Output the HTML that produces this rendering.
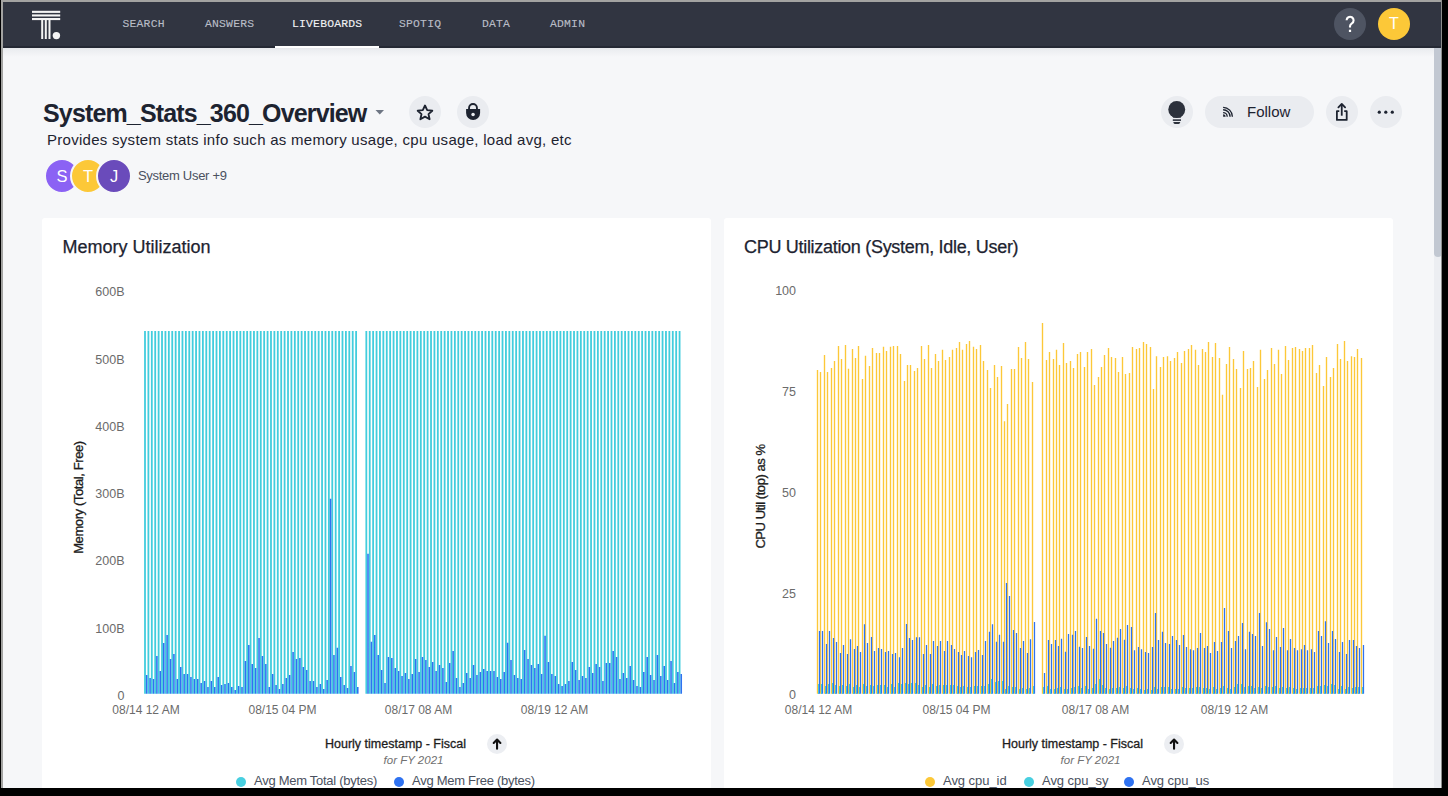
<!DOCTYPE html><html><head><meta charset="utf-8"><style>
*{box-sizing:border-box}
html,body{margin:0;padding:0}
body{width:1448px;height:796px;overflow:hidden;position:relative;background:#000;font-family:"Liberation Sans",sans-serif}
.a{position:absolute}
.t{position:absolute;white-space:nowrap;line-height:1}
.circ{position:absolute;border-radius:50%}
.nav{font-family:"Liberation Mono",monospace;font-size:11.4px;color:#b9bdc7;letter-spacing:0.2px;-webkit-text-stroke:0.12px currentColor}
</style></head><body>
<div class="a" style="left:1px;top:0;width:1441px;height:788px;background:#a3a3a1"></div>
<div class="a" style="left:2.5px;top:47px;width:1440px;height:741px;background:#f6f7f9"></div>
<div class="a" style="left:2.5px;top:1.5px;width:1440px;height:46px;background:#313541"></div>
<div class="a" style="left:2.5px;top:46px;width:1440px;height:1.5px;background:#252934"></div>
<div class="a" style="left:2.5px;top:47.5px;width:1431px;height:9px;background:linear-gradient(#e6e7eb,#eceef1 25%,#f6f7f9)"></div>
<svg class="a" style="left:0;top:0" width="80" height="48">
<g fill="#f4f4f4">
<rect x="32" y="10.8" width="28.2" height="2.1"/>
<rect x="32" y="14.4" width="28.2" height="2.1"/>
<rect x="32" y="18" width="28.2" height="2.1"/>
<rect x="41.2" y="20" width="2" height="19"/>
<rect x="44.8" y="20" width="2" height="19"/>
<rect x="48.5" y="20" width="2" height="19"/>
<circle cx="56.4" cy="35.6" r="3.7"/>
</g></svg>
<div class="t nav" style="left:122.5px;top:19.3px;color:#b9bdc7">SEARCH</div>
<div class="t nav" style="left:205px;top:19.3px;color:#b9bdc7">ANSWERS</div>
<div class="t nav" style="left:292px;top:19.3px;color:#f2f2f4">LIVEBOARDS</div>
<div class="t nav" style="left:399px;top:19.3px;color:#b9bdc7">SPOTIQ</div>
<div class="t nav" style="left:482px;top:19.3px;color:#b9bdc7">DATA</div>
<div class="t nav" style="left:550px;top:19.3px;color:#b9bdc7">ADMIN</div>
<div class="a" style="left:275px;top:46px;width:104px;height:2px;background:#fff"></div>
<div class="circ" style="left:1334px;top:8px;width:32px;height:32px;background:#4e5462"></div>
<svg class="a" style="left:1334px;top:8px" width="32" height="32"><path d="M12.6 12.2 A3.5 3.5 0 1 1 17.9 15.3 Q16 16.4 16 18.2 V19.6" fill="none" stroke="#fff" stroke-width="2.1"/><rect x="14.9" y="21.7" width="2.2" height="2.3" fill="#fff"/></svg>
<div class="circ" style="left:1378px;top:8px;width:32px;height:32px;background:#fcc838"></div>
<div class="t" style="left:1378px;top:16px;width:32px;text-align:center;font-size:16px;color:#fff">T</div>
<div class="a" style="left:1434px;top:48px;width:8px;height:740px;background:#eceef2"></div>
<div class="a" style="left:1434px;top:48px;width:7.5px;height:209px;background:#c2c8d2;border-radius:0 0 4px 4px"></div>
<div class="t" style="left:43px;top:100.8px;font-size:25px;font-weight:bold;color:#1d2330;letter-spacing:-0.85px">System_Stats_360_Overview</div>
<svg class="a" style="left:375px;top:109px" width="10" height="6"><path d="M0.5 1 L9 1 L4.75 5.5Z" fill="#6e7684"/></svg>
<div class="circ" style="left:409px;top:96px;width:32px;height:32px;background:#eaecf0"></div>
<svg class="a" style="left:409px;top:96px" width="32" height="32"><path transform="translate(16 16.9) scale(1.0) translate(-16 -16)" d="M16 8.6 L18.2 13.3 L23.3 13.8 L19.5 17.2 L20.6 22.3 L16 19.7 L11.4 22.3 L12.5 17.2 L8.7 13.8 L13.8 13.3Z" fill="none" stroke="#1d2330" stroke-width="1.85" stroke-linejoin="round"/></svg>
<div class="circ" style="left:457px;top:96px;width:32px;height:32px;background:#eaecf0"></div>
<svg class="a" style="left:457px;top:96px" width="32" height="32"><path d="M12.05 13.5 V11.95 A3.95 3.95 0 0 1 19.95 11.95 V13.5" fill="none" stroke="#1d2330" stroke-width="1.9"/><path d="M9.1 12.9 H23.1 V17 A7 7 0 0 1 9.1 17 Z" fill="#1d2330"/><circle cx="16.05" cy="18.6" r="1.75" fill="#eaecf0"/></svg>
<div class="t" style="left:47px;top:132px;font-size:15px;color:#1d2330;letter-spacing:0.28px">Provides system stats info such as memory usage, cpu usage, load avg, etc</div>
<div class="circ" style="left:44px;top:158px;width:36px;height:36px;background:#8b62f4;border:2px solid #f6f7f9"></div>
<div class="t" style="left:46px;top:168px;width:32px;text-align:center;font-size:16.5px;color:#fff">S</div>
<div class="circ" style="left:70px;top:158px;width:36px;height:36px;background:#fcc838;border:2px solid #f6f7f9"></div>
<div class="t" style="left:72px;top:168px;width:32px;text-align:center;font-size:16.5px;color:#fff">T</div>
<div class="circ" style="left:96px;top:158px;width:36px;height:36px;background:#6a4bbb;border:2px solid #f6f7f9"></div>
<div class="t" style="left:98px;top:168px;width:32px;text-align:center;font-size:16.5px;color:#fff">J</div>
<div class="t" style="left:138px;top:169.4px;font-size:13px;color:#4a5160;letter-spacing:-0.3px">System User +9</div>
<div class="circ" style="left:1161px;top:96px;width:32px;height:32px;background:#eaecf0"></div>
<svg class="a" style="left:1161px;top:96px" width="32" height="32"><circle cx="15.75" cy="13.45" r="8.45" fill="#2c313c"/><path d="M9.6 18 H21.9 L19.7 21.75 H12.25Z" fill="#2c313c"/><rect x="11.8" y="23.3" width="8.2" height="1.6" fill="#2c313c"/><path d="M12.25 26 H19.3 L18.8 27.2 Q18.4 28 17.5 28 H14 Q13.1 28 12.7 27.2Z" fill="#2c313c"/></svg>
<div class="a" style="left:1205px;top:96px;width:109px;height:32px;border-radius:16px;background:#eaecf0"></div>
<svg class="a" style="left:1221px;top:105px" width="14" height="14"><g fill="none" stroke="#1d2330" stroke-width="1.35"><path d="M2.1 7.6 A4.1 4.1 0 0 1 6.2 11.7"/><path d="M2.1 4.7 A7 7 0 0 1 9.1 11.7"/><path d="M2.1 2.4 A9.3 9.3 0 0 1 11.4 11.7"/></g><path d="M2.1 11.7 V9.2 A2.5 2.5 0 0 1 4.6 11.7Z" fill="#1d2330"/></svg>
<div class="t" style="left:1247px;top:103.5px;font-size:15px;color:#1d2330">Follow</div>
<div class="circ" style="left:1326px;top:96px;width:32px;height:32px;background:#eaecf0"></div>
<svg class="a" style="left:1326px;top:96px" width="32" height="32"><g fill="none" stroke="#1d2330" stroke-width="1.8" stroke-linejoin="round"><path d="M13.3 15.15 H10.9 V23.9 H20.7 V15.15 H18.2"/><path d="M15.75 19.7 V8.6"/><path d="M12.4 11.3 L15.75 7.9 L19.1 11.3" stroke-linecap="round"/></g></svg>
<div class="circ" style="left:1370px;top:96px;width:32px;height:32px;background:#eaecf0"></div>
<svg class="a" style="left:1370px;top:96px" width="32" height="32"><g fill="#1d2330"><circle cx="9.3" cy="16.15" r="1.6"/><circle cx="15.8" cy="16.15" r="1.6"/><circle cx="22.3" cy="16.15" r="1.6"/></g></svg>
<div class="a" style="left:42px;top:218px;width:669px;height:580px;background:#fff;border-radius:3px"></div>
<div class="a" style="left:724px;top:218px;width:669px;height:580px;background:#fff;border-radius:3px"></div>
<div class="t" style="left:62.5px;top:238.4px;font-size:18px;color:#1d2330;-webkit-text-stroke:0.25px #1d2330">Memory Utilization</div>
<div class="t" style="left:744px;top:238.2px;font-size:18px;color:#1d2330;letter-spacing:-0.3px;-webkit-text-stroke:0.25px #1d2330">CPU Utilization (System, Idle, User)</div>
<div class="t" style="left:64.5px;width:60px;text-align:right;top:689.9px;font-size:12.5px;color:#6b6b6b">0</div>
<div class="t" style="left:64.5px;width:60px;text-align:right;top:622.6px;font-size:12.5px;color:#6b6b6b">100B</div>
<div class="t" style="left:64.5px;width:60px;text-align:right;top:555.3px;font-size:12.5px;color:#6b6b6b">200B</div>
<div class="t" style="left:64.5px;width:60px;text-align:right;top:488.1px;font-size:12.5px;color:#6b6b6b">300B</div>
<div class="t" style="left:64.5px;width:60px;text-align:right;top:420.8px;font-size:12.5px;color:#6b6b6b">400B</div>
<div class="t" style="left:64.5px;width:60px;text-align:right;top:353.5px;font-size:12.5px;color:#6b6b6b">500B</div>
<div class="t" style="left:64.5px;width:60px;text-align:right;top:286.2px;font-size:12.5px;color:#6b6b6b">600B</div>
<div class="t" style="left:736px;width:60px;text-align:right;top:689.4px;font-size:12.5px;color:#6b6b6b">0</div>
<div class="t" style="left:736px;width:60px;text-align:right;top:588.4px;font-size:12.5px;color:#6b6b6b">25</div>
<div class="t" style="left:736px;width:60px;text-align:right;top:487.4px;font-size:12.5px;color:#6b6b6b">50</div>
<div class="t" style="left:736px;width:60px;text-align:right;top:386.4px;font-size:12.5px;color:#6b6b6b">75</div>
<div class="t" style="left:736px;width:60px;text-align:right;top:285.4px;font-size:12.5px;color:#6b6b6b">100</div>
<div class="t" style="left:96px;width:100px;text-align:center;top:704px;font-size:12px;color:#6b6b6b">08/14 12 AM</div>
<div class="t" style="left:232.5px;width:100px;text-align:center;top:704px;font-size:12px;color:#6b6b6b">08/15 04 PM</div>
<div class="t" style="left:368.5px;width:100px;text-align:center;top:704px;font-size:12px;color:#6b6b6b">08/17 08 AM</div>
<div class="t" style="left:504.5px;width:100px;text-align:center;top:704px;font-size:12px;color:#6b6b6b">08/19 12 AM</div>
<div class="t" style="left:768.5px;width:100px;text-align:center;top:704px;font-size:12px;color:#6b6b6b">08/14 12 AM</div>
<div class="t" style="left:906.5px;width:100px;text-align:center;top:704px;font-size:12px;color:#6b6b6b">08/15 04 PM</div>
<div class="t" style="left:1045.5px;width:100px;text-align:center;top:704px;font-size:12px;color:#6b6b6b">08/17 08 AM</div>
<div class="t" style="left:1184.5px;width:100px;text-align:center;top:704px;font-size:12px;color:#6b6b6b">08/19 12 AM</div>
<div class="t" style="left:-22.200000000000003px;top:490.7px;width:200px;text-align:center;font-size:13px;color:#1d1d1d;letter-spacing:-0.4px;-webkit-text-stroke:0.3px #1d1d1d;transform:rotate(-90deg)">Memory (Total, Free)</div>
<div class="t" style="left:660px;top:490.3px;width:200px;text-align:center;font-size:13px;color:#1d1d1d;letter-spacing:-0.45px;-webkit-text-stroke:0.3px #1d1d1d;transform:rotate(-90deg)">CPU Util (top) as %</div>
<div class="t" style="left:325px;top:737.8px;font-size:12.5px;color:#1d1d1d;-webkit-text-stroke:0.3px #1d1d1d">Hourly timestamp - Fiscal</div>
<div class="circ" style="left:487px;top:733.7px;width:20px;height:20px;background:#eceef2"></div>
<svg class="a" style="left:487px;top:733.7px" width="20" height="20"><g fill="none" stroke="#111" stroke-width="2.1" stroke-linecap="round" stroke-linejoin="round"><path d="M10.05 14.8 V6"/><path d="M6.7 8.9 L10.05 5.5 L13.4 8.9"/></g></svg>
<div class="t" style="left:363.5px;width:100px;text-align:center;top:755px;font-size:11.5px;font-style:italic;color:#707070">for FY 2021</div>
<div class="t" style="left:1002px;top:737.8px;font-size:12.5px;color:#1d1d1d;-webkit-text-stroke:0.3px #1d1d1d">Hourly timestamp - Fiscal</div>
<div class="circ" style="left:1164px;top:733.7px;width:20px;height:20px;background:#eceef2"></div>
<svg class="a" style="left:1164px;top:733.7px" width="20" height="20"><g fill="none" stroke="#111" stroke-width="2.1" stroke-linecap="round" stroke-linejoin="round"><path d="M10.05 14.8 V6"/><path d="M6.7 8.9 L10.05 5.5 L13.4 8.9"/></g></svg>
<div class="t" style="left:1040.5px;width:100px;text-align:center;top:755px;font-size:11.5px;font-style:italic;color:#707070">for FY 2021</div>
<div class="circ" style="left:236px;top:777.2px;width:10px;height:10px;background:#48cfe0"></div>
<div class="t" style="left:254px;top:774px;font-size:13px;color:#4a5160;letter-spacing:-0.28px">Avg Mem Total (bytes)</div>
<div class="circ" style="left:394px;top:777.2px;width:10px;height:10px;background:#2f72f0"></div>
<div class="t" style="left:412px;top:774px;font-size:13px;color:#4a5160;letter-spacing:-0.28px">Avg Mem Free (bytes)</div>
<div class="circ" style="left:925px;top:777.2px;width:10px;height:10px;background:#fcc838"></div>
<div class="t" style="left:943px;top:774px;font-size:13px;color:#4a5160;letter-spacing:-0.05px">Avg cpu_id</div>
<div class="circ" style="left:1024px;top:777.2px;width:10px;height:10px;background:#48cfe0"></div>
<div class="t" style="left:1042px;top:774px;font-size:13px;color:#4a5160;letter-spacing:-0.05px">Avg cpu_sy</div>
<div class="circ" style="left:1124px;top:777.2px;width:10px;height:10px;background:#2f72f0"></div>
<div class="t" style="left:1142px;top:774px;font-size:13px;color:#4a5160;letter-spacing:-0.05px">Avg cpu_us</div>
<svg class="a" style="left:0;top:0" width="1448" height="796"><path fill="#42cddd" d="M144.10 330.90h1.80V693.80h-1.80zM147.50 330.90h1.80V693.80h-1.80zM150.91 330.90h1.80V693.80h-1.80zM154.31 330.90h1.80V693.80h-1.80zM157.72 330.90h1.80V693.80h-1.80zM161.12 330.90h1.80V693.80h-1.80zM164.53 330.90h1.80V693.80h-1.80zM167.94 330.90h1.80V693.80h-1.80zM171.34 330.90h1.80V693.80h-1.80zM174.75 330.90h1.80V693.80h-1.80zM178.15 330.90h1.80V693.80h-1.80zM181.56 330.90h1.80V693.80h-1.80zM184.96 330.90h1.80V693.80h-1.80zM188.37 330.90h1.80V693.80h-1.80zM191.77 330.90h1.80V693.80h-1.80zM195.17 330.90h1.80V693.80h-1.80zM198.58 330.90h1.80V693.80h-1.80zM201.98 330.90h1.80V693.80h-1.80zM205.39 330.90h1.80V693.80h-1.80zM208.79 330.90h1.80V693.80h-1.80zM212.20 330.90h1.80V693.80h-1.80zM215.60 330.90h1.80V693.80h-1.80zM219.01 330.90h1.80V693.80h-1.80zM222.41 330.90h1.80V693.80h-1.80zM225.82 330.90h1.80V693.80h-1.80zM229.22 330.90h1.80V693.80h-1.80zM232.63 330.90h1.80V693.80h-1.80zM236.03 330.90h1.80V693.80h-1.80zM239.44 330.90h1.80V693.80h-1.80zM242.84 330.90h1.80V693.80h-1.80zM246.25 330.90h1.80V693.80h-1.80zM249.65 330.90h1.80V693.80h-1.80zM253.06 330.90h1.80V693.80h-1.80zM256.46 330.90h1.80V693.80h-1.80zM259.87 330.90h1.80V693.80h-1.80zM263.27 330.90h1.80V693.80h-1.80zM266.68 330.90h1.80V693.80h-1.80zM270.08 330.90h1.80V693.80h-1.80zM273.49 330.90h1.80V693.80h-1.80zM276.89 330.90h1.80V693.80h-1.80zM280.30 330.90h1.80V693.80h-1.80zM283.70 330.90h1.80V693.80h-1.80zM287.11 330.90h1.80V693.80h-1.80zM290.51 330.90h1.80V693.80h-1.80zM293.92 330.90h1.80V693.80h-1.80zM297.32 330.90h1.80V693.80h-1.80zM300.73 330.90h1.80V693.80h-1.80zM304.13 330.90h1.80V693.80h-1.80zM307.54 330.90h1.80V693.80h-1.80zM310.94 330.90h1.80V693.80h-1.80zM314.35 330.90h1.80V693.80h-1.80zM317.75 330.90h1.80V693.80h-1.80zM321.16 330.90h1.80V693.80h-1.80zM324.56 330.90h1.80V693.80h-1.80zM327.97 330.90h1.80V693.80h-1.80zM331.37 330.90h1.80V693.80h-1.80zM334.78 330.90h1.80V693.80h-1.80zM338.19 330.90h1.80V693.80h-1.80zM341.59 330.90h1.80V693.80h-1.80zM344.99 330.90h1.80V693.80h-1.80zM348.40 330.90h1.80V693.80h-1.80zM351.81 330.90h1.80V693.80h-1.80zM355.21 330.90h1.80V693.80h-1.80zM365.43 330.90h1.80V693.80h-1.80zM368.83 330.90h1.80V693.80h-1.80zM372.23 330.90h1.80V693.80h-1.80zM375.64 330.90h1.80V693.80h-1.80zM379.05 330.90h1.80V693.80h-1.80zM382.45 330.90h1.80V693.80h-1.80zM385.85 330.90h1.80V693.80h-1.80zM389.26 330.90h1.80V693.80h-1.80zM392.67 330.90h1.80V693.80h-1.80zM396.07 330.90h1.80V693.80h-1.80zM399.47 330.90h1.80V693.80h-1.80zM402.88 330.90h1.80V693.80h-1.80zM406.29 330.90h1.80V693.80h-1.80zM409.69 330.90h1.80V693.80h-1.80zM413.09 330.90h1.80V693.80h-1.80zM416.50 330.90h1.80V693.80h-1.80zM419.91 330.90h1.80V693.80h-1.80zM423.31 330.90h1.80V693.80h-1.80zM426.71 330.90h1.80V693.80h-1.80zM430.12 330.90h1.80V693.80h-1.80zM433.53 330.90h1.80V693.80h-1.80zM436.93 330.90h1.80V693.80h-1.80zM440.33 330.90h1.80V693.80h-1.80zM443.74 330.90h1.80V693.80h-1.80zM447.14 330.90h1.80V693.80h-1.80zM450.55 330.90h1.80V693.80h-1.80zM453.95 330.90h1.80V693.80h-1.80zM457.36 330.90h1.80V693.80h-1.80zM460.76 330.90h1.80V693.80h-1.80zM464.17 330.90h1.80V693.80h-1.80zM467.57 330.90h1.80V693.80h-1.80zM470.98 330.90h1.80V693.80h-1.80zM474.38 330.90h1.80V693.80h-1.80zM477.79 330.90h1.80V693.80h-1.80zM481.19 330.90h1.80V693.80h-1.80zM484.60 330.90h1.80V693.80h-1.80zM488.00 330.90h1.80V693.80h-1.80zM491.41 330.90h1.80V693.80h-1.80zM494.81 330.90h1.80V693.80h-1.80zM498.22 330.90h1.80V693.80h-1.80zM501.62 330.90h1.80V693.80h-1.80zM505.03 330.90h1.80V693.80h-1.80zM508.44 330.90h1.80V693.80h-1.80zM511.84 330.90h1.80V693.80h-1.80zM515.25 330.90h1.80V693.80h-1.80zM518.65 330.90h1.80V693.80h-1.80zM522.06 330.90h1.80V693.80h-1.80zM525.46 330.90h1.80V693.80h-1.80zM528.87 330.90h1.80V693.80h-1.80zM532.27 330.90h1.80V693.80h-1.80zM535.68 330.90h1.80V693.80h-1.80zM539.08 330.90h1.80V693.80h-1.80zM542.49 330.90h1.80V693.80h-1.80zM545.89 330.90h1.80V693.80h-1.80zM549.30 330.90h1.80V693.80h-1.80zM552.70 330.90h1.80V693.80h-1.80zM556.11 330.90h1.80V693.80h-1.80zM559.51 330.90h1.80V693.80h-1.80zM562.92 330.90h1.80V693.80h-1.80zM566.32 330.90h1.80V693.80h-1.80zM569.73 330.90h1.80V693.80h-1.80zM573.13 330.90h1.80V693.80h-1.80zM576.54 330.90h1.80V693.80h-1.80zM579.94 330.90h1.80V693.80h-1.80zM583.35 330.90h1.80V693.80h-1.80zM586.75 330.90h1.80V693.80h-1.80zM590.15 330.90h1.80V693.80h-1.80zM593.56 330.90h1.80V693.80h-1.80zM596.97 330.90h1.80V693.80h-1.80zM600.37 330.90h1.80V693.80h-1.80zM603.77 330.90h1.80V693.80h-1.80zM607.18 330.90h1.80V693.80h-1.80zM610.59 330.90h1.80V693.80h-1.80zM613.99 330.90h1.80V693.80h-1.80zM617.39 330.90h1.80V693.80h-1.80zM620.80 330.90h1.80V693.80h-1.80zM624.21 330.90h1.80V693.80h-1.80zM627.61 330.90h1.80V693.80h-1.80zM631.01 330.90h1.80V693.80h-1.80zM634.42 330.90h1.80V693.80h-1.80zM637.83 330.90h1.80V693.80h-1.80zM641.23 330.90h1.80V693.80h-1.80zM644.63 330.90h1.80V693.80h-1.80zM648.04 330.90h1.80V693.80h-1.80zM651.45 330.90h1.80V693.80h-1.80zM654.85 330.90h1.80V693.80h-1.80zM658.25 330.90h1.80V693.80h-1.80zM661.66 330.90h1.80V693.80h-1.80zM665.06 330.90h1.80V693.80h-1.80zM668.47 330.90h1.80V693.80h-1.80zM671.88 330.90h1.80V693.80h-1.80zM675.28 330.90h1.80V693.80h-1.80zM678.68 330.90h1.80V693.80h-1.80z"/><path fill="#2f72f0" d="M145.90 675.00h1.55V693.80h-1.55zM149.31 678.00h1.55V693.80h-1.55zM152.71 679.00h1.55V693.80h-1.55zM156.12 655.90h1.55V693.80h-1.55zM159.52 670.90h1.55V693.80h-1.55zM162.93 643.00h1.55V693.80h-1.55zM166.33 635.00h1.55V693.80h-1.55zM169.74 658.90h1.55V693.80h-1.55zM173.14 654.10h1.55V693.80h-1.55zM176.55 679.00h1.55V693.80h-1.55zM179.95 666.90h1.55V693.80h-1.55zM183.36 674.00h1.55V693.80h-1.55zM186.76 674.00h1.55V693.80h-1.55zM190.17 677.00h1.55V693.80h-1.55zM193.57 679.00h1.55V693.80h-1.55zM196.97 679.00h1.55V693.80h-1.55zM200.38 683.00h1.55V693.80h-1.55zM203.78 681.00h1.55V693.80h-1.55zM207.19 687.00h1.55V693.80h-1.55zM210.59 681.00h1.55V693.80h-1.55zM214.00 687.00h1.55V693.80h-1.55zM217.41 677.00h1.55V693.80h-1.55zM220.81 685.00h1.55V693.80h-1.55zM224.22 684.00h1.55V693.80h-1.55zM227.62 683.00h1.55V693.80h-1.55zM231.03 687.00h1.55V693.80h-1.55zM234.43 690.10h1.55V693.80h-1.55zM237.83 686.00h1.55V693.80h-1.55zM241.24 687.00h1.55V693.80h-1.55zM244.64 660.90h1.55V693.80h-1.55zM248.05 645.00h1.55V693.80h-1.55zM251.45 663.90h1.55V693.80h-1.55zM254.86 667.90h1.55V693.80h-1.55zM258.26 638.00h1.55V693.80h-1.55zM261.67 655.90h1.55V693.80h-1.55zM265.07 663.90h1.55V693.80h-1.55zM268.48 687.00h1.55V693.80h-1.55zM271.88 674.00h1.55V693.80h-1.55zM275.29 685.00h1.55V693.80h-1.55zM278.69 689.00h1.55V693.80h-1.55zM282.10 684.00h1.55V693.80h-1.55zM285.50 678.00h1.55V693.80h-1.55zM288.91 675.00h1.55V693.80h-1.55zM292.31 651.90h1.55V693.80h-1.55zM295.72 658.90h1.55V693.80h-1.55zM299.12 657.90h1.55V693.80h-1.55zM302.53 666.90h1.55V693.80h-1.55zM305.94 670.00h1.55V693.80h-1.55zM309.34 681.00h1.55V693.80h-1.55zM312.75 681.00h1.55V693.80h-1.55zM316.15 687.00h1.55V693.80h-1.55zM319.56 684.00h1.55V693.80h-1.55zM322.96 689.00h1.55V693.80h-1.55zM326.37 680.00h1.55V693.80h-1.55zM329.77 498.80h1.55V693.80h-1.55zM333.17 654.90h1.55V693.80h-1.55zM336.58 647.80h1.55V693.80h-1.55zM339.99 677.00h1.55V693.80h-1.55zM343.39 685.00h1.55V693.80h-1.55zM346.79 688.00h1.55V693.80h-1.55zM350.20 665.90h1.55V693.80h-1.55zM353.61 672.00h1.55V693.80h-1.55zM357.01 687.00h1.55V693.80h-1.55zM367.23 553.80h1.55V693.80h-1.55zM370.63 641.80h1.55V693.80h-1.55zM374.03 635.00h1.55V693.80h-1.55zM377.44 654.90h1.55V693.80h-1.55zM380.85 670.00h1.55V693.80h-1.55zM384.25 683.00h1.55V693.80h-1.55zM387.65 656.90h1.55V693.80h-1.55zM391.06 657.90h1.55V693.80h-1.55zM394.47 667.90h1.55V693.80h-1.55zM397.87 670.90h1.55V693.80h-1.55zM401.27 676.00h1.55V693.80h-1.55zM404.68 673.00h1.55V693.80h-1.55zM408.09 679.00h1.55V693.80h-1.55zM411.49 674.00h1.55V693.80h-1.55zM414.89 658.90h1.55V693.80h-1.55zM418.30 672.00h1.55V693.80h-1.55zM421.71 656.90h1.55V693.80h-1.55zM425.11 659.90h1.55V693.80h-1.55zM428.51 666.90h1.55V693.80h-1.55zM431.92 661.90h1.55V693.80h-1.55zM435.33 671.00h1.55V693.80h-1.55zM438.73 665.00h1.55V693.80h-1.55zM442.13 668.00h1.55V693.80h-1.55zM445.54 682.00h1.55V693.80h-1.55zM448.94 662.90h1.55V693.80h-1.55zM452.35 650.90h1.55V693.80h-1.55zM455.75 678.00h1.55V693.80h-1.55zM459.16 687.10h1.55V693.80h-1.55zM462.56 683.00h1.55V693.80h-1.55zM465.97 673.00h1.55V693.80h-1.55zM469.38 678.00h1.55V693.80h-1.55zM472.78 665.00h1.55V693.80h-1.55zM476.18 675.00h1.55V693.80h-1.55zM479.59 672.00h1.55V693.80h-1.55zM483.00 669.00h1.55V693.80h-1.55zM486.40 671.00h1.55V693.80h-1.55zM489.80 671.00h1.55V693.80h-1.55zM493.21 671.00h1.55V693.80h-1.55zM496.62 677.00h1.55V693.80h-1.55zM500.02 679.00h1.55V693.80h-1.55zM503.42 672.00h1.55V693.80h-1.55zM506.83 642.80h1.55V693.80h-1.55zM510.24 659.90h1.55V693.80h-1.55zM513.64 675.00h1.55V693.80h-1.55zM517.04 678.00h1.55V693.80h-1.55zM520.45 679.00h1.55V693.80h-1.55zM523.86 649.90h1.55V693.80h-1.55zM527.26 658.90h1.55V693.80h-1.55zM530.66 665.00h1.55V693.80h-1.55zM534.07 668.00h1.55V693.80h-1.55zM537.48 664.00h1.55V693.80h-1.55zM540.88 674.00h1.55V693.80h-1.55zM544.28 635.80h1.55V693.80h-1.55zM547.69 661.90h1.55V693.80h-1.55zM551.10 674.00h1.55V693.80h-1.55zM554.50 676.00h1.55V693.80h-1.55zM557.90 684.10h1.55V693.80h-1.55zM561.31 686.10h1.55V693.80h-1.55zM564.72 684.10h1.55V693.80h-1.55zM568.12 681.00h1.55V693.80h-1.55zM571.52 661.90h1.55V693.80h-1.55zM574.93 670.00h1.55V693.80h-1.55zM578.34 680.00h1.55V693.80h-1.55zM581.74 676.00h1.55V693.80h-1.55zM585.14 678.00h1.55V693.80h-1.55zM588.55 667.00h1.55V693.80h-1.55zM591.95 673.00h1.55V693.80h-1.55zM595.36 664.00h1.55V693.80h-1.55zM598.76 667.00h1.55V693.80h-1.55zM602.17 681.00h1.55V693.80h-1.55zM605.57 662.90h1.55V693.80h-1.55zM608.98 662.90h1.55V693.80h-1.55zM612.38 650.90h1.55V693.80h-1.55zM615.79 656.90h1.55V693.80h-1.55zM619.19 679.00h1.55V693.80h-1.55zM622.60 673.00h1.55V693.80h-1.55zM626.00 678.00h1.55V693.80h-1.55zM629.41 666.00h1.55V693.80h-1.55zM632.81 680.00h1.55V693.80h-1.55zM636.22 686.10h1.55V693.80h-1.55zM639.62 687.10h1.55V693.80h-1.55zM643.03 672.00h1.55V693.80h-1.55zM646.43 656.90h1.55V693.80h-1.55zM649.84 675.00h1.55V693.80h-1.55zM653.25 680.00h1.55V693.80h-1.55zM656.65 654.90h1.55V693.80h-1.55zM660.05 676.00h1.55V693.80h-1.55zM663.46 666.00h1.55V693.80h-1.55zM666.86 680.00h1.55V693.80h-1.55zM670.27 660.90h1.55V693.80h-1.55zM673.67 683.00h1.55V693.80h-1.55zM677.08 672.00h1.55V693.80h-1.55zM680.48 674.00h1.55V693.80h-1.55z"/>
<path fill="#fcc838" d="M816.82 370.00h1.36V693.70h-1.36zM819.82 372.00h1.36V693.70h-1.36zM823.82 355.00h1.36V693.70h-1.36zM826.82 372.00h1.36V693.70h-1.36zM830.82 368.00h1.36V693.70h-1.36zM833.82 360.90h1.36V693.70h-1.36zM837.82 346.00h1.36V693.70h-1.36zM840.82 359.00h1.36V693.70h-1.36zM844.82 345.10h1.36V693.70h-1.36zM847.82 368.80h1.36V693.70h-1.36zM851.82 349.00h1.36V693.70h-1.36zM854.82 358.10h1.36V693.70h-1.36zM857.82 346.00h1.36V693.70h-1.36zM861.82 379.00h1.36V693.70h-1.36zM864.82 355.80h1.36V693.70h-1.36zM868.82 366.00h1.36V693.70h-1.36zM871.82 347.90h1.36V693.70h-1.36zM875.82 353.00h1.36V693.70h-1.36zM878.82 353.00h1.36V693.70h-1.36zM882.82 346.80h1.36V693.70h-1.36zM885.82 351.00h1.36V693.70h-1.36zM889.82 346.80h1.36V693.70h-1.36zM892.82 346.00h1.36V693.70h-1.36zM896.82 346.00h1.36V693.70h-1.36zM899.82 353.90h1.36V693.70h-1.36zM903.82 381.00h1.36V693.70h-1.36zM906.82 364.90h1.36V693.70h-1.36zM909.82 364.90h1.36V693.70h-1.36zM913.82 371.10h1.36V693.70h-1.36zM916.82 368.00h1.36V693.70h-1.36zM920.82 346.00h1.36V693.70h-1.36zM923.82 359.00h1.36V693.70h-1.36zM927.82 345.10h1.36V693.70h-1.36zM930.82 368.00h1.36V693.70h-1.36zM934.82 353.90h1.36V693.70h-1.36zM937.82 360.90h1.36V693.70h-1.36zM941.82 349.80h1.36V693.70h-1.36zM944.82 360.00h1.36V693.70h-1.36zM948.82 356.90h1.36V693.70h-1.36zM951.82 349.80h1.36V693.70h-1.36zM955.82 347.90h1.36V693.70h-1.36zM958.82 341.90h1.36V693.70h-1.36zM961.82 349.80h1.36V693.70h-1.36zM965.82 343.90h1.36V693.70h-1.36zM968.82 341.10h1.36V693.70h-1.36zM972.82 346.80h1.36V693.70h-1.36zM975.82 349.00h1.36V693.70h-1.36zM979.82 345.10h1.36V693.70h-1.36zM982.82 360.90h1.36V693.70h-1.36zM986.82 370.00h1.36V693.70h-1.36zM989.82 388.00h1.36V693.70h-1.36zM993.82 364.90h1.36V693.70h-1.36zM996.82 377.10h1.36V693.70h-1.36zM1000.82 366.00h1.36V693.70h-1.36zM1003.82 421.20h1.36V693.70h-1.36zM1006.82 404.10h1.36V693.70h-1.36zM1010.82 369.00h1.36V693.70h-1.36zM1013.82 369.00h1.36V693.70h-1.36zM1017.82 347.10h1.36V693.70h-1.36zM1020.82 358.10h1.36V693.70h-1.36zM1024.82 342.00h1.36V693.70h-1.36zM1027.82 359.00h1.36V693.70h-1.36zM1031.82 382.10h1.36V693.70h-1.36zM1041.82 323.00h1.36V693.70h-1.36zM1045.82 360.00h1.36V693.70h-1.36zM1048.82 352.10h1.36V693.70h-1.36zM1052.82 359.00h1.36V693.70h-1.36zM1055.82 349.80h1.36V693.70h-1.36zM1058.82 365.10h1.36V693.70h-1.36zM1062.82 343.00h1.36V693.70h-1.36zM1065.82 362.90h1.36V693.70h-1.36zM1069.82 360.90h1.36V693.70h-1.36zM1072.82 368.00h1.36V693.70h-1.36zM1076.82 353.90h1.36V693.70h-1.36zM1079.82 352.10h1.36V693.70h-1.36zM1083.82 367.10h1.36V693.70h-1.36zM1086.82 352.10h1.36V693.70h-1.36zM1090.82 349.00h1.36V693.70h-1.36zM1093.82 384.90h1.36V693.70h-1.36zM1097.82 377.10h1.36V693.70h-1.36zM1100.82 367.10h1.36V693.70h-1.36zM1103.82 355.00h1.36V693.70h-1.36zM1107.82 348.10h1.36V693.70h-1.36zM1110.82 356.90h1.36V693.70h-1.36zM1114.82 358.10h1.36V693.70h-1.36zM1117.82 372.00h1.36V693.70h-1.36zM1121.82 356.90h1.36V693.70h-1.36zM1124.82 373.90h1.36V693.70h-1.36zM1128.82 373.00h1.36V693.70h-1.36zM1131.82 347.10h1.36V693.70h-1.36zM1135.82 349.00h1.36V693.70h-1.36zM1138.82 348.10h1.36V693.70h-1.36zM1142.82 342.00h1.36V693.70h-1.36zM1145.82 343.90h1.36V693.70h-1.36zM1149.82 347.10h1.36V693.70h-1.36zM1152.82 389.00h1.36V693.70h-1.36zM1155.82 356.20h1.36V693.70h-1.36zM1159.82 367.10h1.36V693.70h-1.36zM1162.82 356.90h1.36V693.70h-1.36zM1166.82 356.20h1.36V693.70h-1.36zM1169.82 360.90h1.36V693.70h-1.36zM1173.82 358.10h1.36V693.70h-1.36zM1176.82 352.10h1.36V693.70h-1.36zM1180.82 362.90h1.36V693.70h-1.36zM1183.82 351.00h1.36V693.70h-1.36zM1187.82 349.00h1.36V693.70h-1.36zM1190.82 345.10h1.36V693.70h-1.36zM1194.82 349.80h1.36V693.70h-1.36zM1197.82 365.10h1.36V693.70h-1.36zM1201.82 349.00h1.36V693.70h-1.36zM1204.82 352.10h1.36V693.70h-1.36zM1207.82 342.00h1.36V693.70h-1.36zM1211.82 356.90h1.36V693.70h-1.36zM1214.82 343.00h1.36V693.70h-1.36zM1218.82 358.10h1.36V693.70h-1.36zM1221.82 394.80h1.36V693.70h-1.36zM1225.82 364.10h1.36V693.70h-1.36zM1228.82 347.10h1.36V693.70h-1.36zM1232.82 359.00h1.36V693.70h-1.36zM1235.82 369.00h1.36V693.70h-1.36zM1239.82 388.00h1.36V693.70h-1.36zM1242.82 351.00h1.36V693.70h-1.36zM1246.82 369.00h1.36V693.70h-1.36zM1249.82 368.00h1.36V693.70h-1.36zM1252.82 360.90h1.36V693.70h-1.36zM1256.82 386.90h1.36V693.70h-1.36zM1259.82 349.80h1.36V693.70h-1.36zM1263.82 379.00h1.36V693.70h-1.36zM1266.82 370.00h1.36V693.70h-1.36zM1270.82 348.10h1.36V693.70h-1.36zM1273.82 364.10h1.36V693.70h-1.36zM1277.82 349.80h1.36V693.70h-1.36zM1280.82 373.90h1.36V693.70h-1.36zM1284.82 346.00h1.36V693.70h-1.36zM1287.82 360.00h1.36V693.70h-1.36zM1291.82 348.10h1.36V693.70h-1.36zM1294.82 347.10h1.36V693.70h-1.36zM1298.82 349.00h1.36V693.70h-1.36zM1301.82 351.00h1.36V693.70h-1.36zM1304.82 348.10h1.36V693.70h-1.36zM1308.82 348.10h1.36V693.70h-1.36zM1311.82 345.10h1.36V693.70h-1.36zM1315.82 373.00h1.36V693.70h-1.36zM1318.82 365.10h1.36V693.70h-1.36zM1322.82 386.00h1.36V693.70h-1.36zM1325.82 356.90h1.36V693.70h-1.36zM1329.82 377.10h1.36V693.70h-1.36zM1332.82 368.00h1.36V693.70h-1.36zM1336.82 343.90h1.36V693.70h-1.36zM1339.82 359.00h1.36V693.70h-1.36zM1343.82 341.10h1.36V693.70h-1.36zM1346.82 361.10h1.36V693.70h-1.36zM1350.82 356.20h1.36V693.70h-1.36zM1353.82 356.90h1.36V693.70h-1.36zM1356.82 349.00h1.36V693.70h-1.36zM1360.82 358.10h1.36V693.70h-1.36z"/><path fill="#42cddd" shape-rendering="crispEdges" d="M818.00 684.10h1.00V693.70h-1.00zM821.00 684.10h1.00V693.70h-1.00zM825.00 685.80h1.00V693.70h-1.00zM828.00 684.10h1.00V693.70h-1.00zM832.00 683.00h1.00V693.70h-1.00zM835.00 684.90h1.00V693.70h-1.00zM839.00 686.00h1.00V693.70h-1.00zM842.00 684.90h1.00V693.70h-1.00zM846.00 686.00h1.00V693.70h-1.00zM849.00 684.10h1.00V693.70h-1.00zM853.00 686.90h1.00V693.70h-1.00zM856.00 684.90h1.00V693.70h-1.00zM859.00 686.90h1.00V693.70h-1.00zM863.00 684.10h1.00V693.70h-1.00zM866.00 686.00h1.00V693.70h-1.00zM870.00 684.90h1.00V693.70h-1.00zM873.00 686.00h1.00V693.70h-1.00zM877.00 684.90h1.00V693.70h-1.00zM880.00 684.90h1.00V693.70h-1.00zM884.00 684.90h1.00V693.70h-1.00zM887.00 686.80h1.00V693.70h-1.00zM891.00 684.00h1.00V693.70h-1.00zM894.00 687.00h1.00V693.70h-1.00zM898.00 683.00h1.00V693.70h-1.00zM901.00 684.00h1.00V693.70h-1.00zM905.00 683.00h1.00V693.70h-1.00zM908.00 684.00h1.00V693.70h-1.00zM911.00 683.00h1.00V693.70h-1.00zM915.00 683.00h1.00V693.70h-1.00zM918.00 684.90h1.00V693.70h-1.00zM922.00 687.00h1.00V693.70h-1.00zM925.00 684.90h1.00V693.70h-1.00zM929.00 687.00h1.00V693.70h-1.00zM932.00 684.00h1.00V693.70h-1.00zM936.00 686.20h1.00V693.70h-1.00zM939.00 684.90h1.00V693.70h-1.00zM943.00 684.90h1.00V693.70h-1.00zM946.00 684.90h1.00V693.70h-1.00zM950.00 684.90h1.00V693.70h-1.00zM953.00 684.90h1.00V693.70h-1.00zM957.00 686.20h1.00V693.70h-1.00zM960.00 687.00h1.00V693.70h-1.00zM963.00 686.20h1.00V693.70h-1.00zM967.00 687.00h1.00V693.70h-1.00zM970.00 687.00h1.00V693.70h-1.00zM974.00 686.20h1.00V693.70h-1.00zM977.00 686.20h1.00V693.70h-1.00zM981.00 686.20h1.00V693.70h-1.00zM984.00 686.20h1.00V693.70h-1.00zM988.00 684.00h1.00V693.70h-1.00zM991.00 679.10h1.00V693.70h-1.00zM995.00 681.90h1.00V693.70h-1.00zM998.00 681.00h1.00V693.70h-1.00zM1002.00 681.00h1.00V693.70h-1.00zM1005.00 689.00h1.00V693.70h-1.00zM1008.00 686.10h1.00V693.70h-1.00zM1012.00 687.00h1.00V693.70h-1.00zM1015.00 687.00h1.00V693.70h-1.00zM1019.00 689.00h1.00V693.70h-1.00zM1022.00 687.90h1.00V693.70h-1.00zM1026.00 689.00h1.00V693.70h-1.00zM1029.00 687.90h1.00V693.70h-1.00zM1033.00 686.10h1.00V693.70h-1.00zM1043.00 687.00h1.00V693.70h-1.00zM1047.00 686.10h1.00V693.70h-1.00zM1050.00 689.00h1.00V693.70h-1.00zM1054.00 689.00h1.00V693.70h-1.00zM1057.00 687.90h1.00V693.70h-1.00zM1060.00 687.00h1.00V693.70h-1.00zM1064.00 689.00h1.00V693.70h-1.00zM1067.00 689.00h1.00V693.70h-1.00zM1071.00 687.90h1.00V693.70h-1.00zM1074.00 687.00h1.00V693.70h-1.00zM1078.00 686.10h1.00V693.70h-1.00zM1081.00 687.90h1.00V693.70h-1.00zM1085.00 686.10h1.00V693.70h-1.00zM1088.00 688.90h1.00V693.70h-1.00zM1092.00 688.20h1.00V693.70h-1.00zM1095.00 684.00h1.00V693.70h-1.00zM1099.00 679.20h1.00V693.70h-1.00zM1102.00 685.10h1.00V693.70h-1.00zM1105.00 688.20h1.00V693.70h-1.00zM1109.00 688.90h1.00V693.70h-1.00zM1112.00 688.20h1.00V693.70h-1.00zM1116.00 688.20h1.00V693.70h-1.00zM1119.00 686.80h1.00V693.70h-1.00zM1123.00 688.20h1.00V693.70h-1.00zM1126.00 686.10h1.00V693.70h-1.00zM1130.00 688.20h1.00V693.70h-1.00zM1133.00 688.90h1.00V693.70h-1.00zM1137.00 688.20h1.00V693.70h-1.00zM1140.00 688.90h1.00V693.70h-1.00zM1144.00 689.80h1.00V693.70h-1.00zM1147.00 688.90h1.00V693.70h-1.00zM1151.00 689.80h1.00V693.70h-1.00zM1154.00 686.80h1.00V693.70h-1.00zM1157.00 688.90h1.00V693.70h-1.00zM1161.00 686.80h1.00V693.70h-1.00zM1164.00 686.80h1.00V693.70h-1.00zM1168.00 686.80h1.00V693.70h-1.00zM1171.00 688.90h1.00V693.70h-1.00zM1175.00 688.90h1.00V693.70h-1.00zM1178.00 688.90h1.00V693.70h-1.00zM1182.00 686.80h1.00V693.70h-1.00zM1185.00 688.20h1.00V693.70h-1.00zM1189.00 688.20h1.00V693.70h-1.00zM1192.00 688.20h1.00V693.70h-1.00zM1196.00 686.80h1.00V693.70h-1.00zM1199.00 686.80h1.00V693.70h-1.00zM1203.00 688.20h1.00V693.70h-1.00zM1206.00 688.20h1.00V693.70h-1.00zM1209.00 688.90h1.00V693.70h-1.00zM1213.00 686.80h1.00V693.70h-1.00zM1216.00 688.90h1.00V693.70h-1.00zM1220.00 687.90h1.00V693.70h-1.00zM1223.00 686.10h1.00V693.70h-1.00zM1227.00 688.20h1.00V693.70h-1.00zM1230.00 688.90h1.00V693.70h-1.00zM1234.00 686.80h1.00V693.70h-1.00zM1237.00 684.00h1.00V693.70h-1.00zM1241.00 684.00h1.00V693.70h-1.00zM1244.00 686.80h1.00V693.70h-1.00zM1248.00 686.10h1.00V693.70h-1.00zM1251.00 686.10h1.00V693.70h-1.00zM1254.00 688.20h1.00V693.70h-1.00zM1258.00 686.80h1.00V693.70h-1.00zM1261.00 688.20h1.00V693.70h-1.00zM1265.00 686.10h1.00V693.70h-1.00zM1268.00 686.80h1.00V693.70h-1.00zM1272.00 686.80h1.00V693.70h-1.00zM1275.00 686.10h1.00V693.70h-1.00zM1279.00 688.20h1.00V693.70h-1.00zM1282.00 686.80h1.00V693.70h-1.00zM1286.00 688.20h1.00V693.70h-1.00zM1289.00 686.80h1.00V693.70h-1.00zM1293.00 688.20h1.00V693.70h-1.00zM1296.00 688.90h1.00V693.70h-1.00zM1300.00 688.20h1.00V693.70h-1.00zM1303.00 688.20h1.00V693.70h-1.00zM1306.00 688.20h1.00V693.70h-1.00zM1310.00 688.20h1.00V693.70h-1.00zM1313.00 688.20h1.00V693.70h-1.00zM1317.00 686.10h1.00V693.70h-1.00zM1320.00 686.10h1.00V693.70h-1.00zM1324.00 685.10h1.00V693.70h-1.00zM1327.00 686.10h1.00V693.70h-1.00zM1331.00 684.00h1.00V693.70h-1.00zM1334.00 685.10h1.00V693.70h-1.00zM1338.00 688.90h1.00V693.70h-1.00zM1341.00 686.10h1.00V693.70h-1.00zM1345.00 688.90h1.00V693.70h-1.00zM1348.00 686.80h1.00V693.70h-1.00zM1352.00 688.20h1.00V693.70h-1.00zM1355.00 686.80h1.00V693.70h-1.00zM1358.00 686.80h1.00V693.70h-1.00zM1362.00 686.80h1.00V693.70h-1.00z"/><path fill="#2f72f0" d="M818.88 631.00h1.24V693.70h-1.24zM821.88 631.00h1.24V693.70h-1.24zM825.88 644.00h1.24V693.70h-1.24zM828.88 631.00h1.24V693.70h-1.24zM832.88 638.10h1.24V693.70h-1.24zM835.88 642.10h1.24V693.70h-1.24zM839.88 653.00h1.24V693.70h-1.24zM842.88 645.10h1.24V693.70h-1.24zM846.88 653.90h1.24V693.70h-1.24zM849.88 639.30h1.24V693.70h-1.24zM853.88 649.10h1.24V693.70h-1.24zM856.88 646.00h1.24V693.70h-1.24zM859.88 652.10h1.24V693.70h-1.24zM863.88 624.20h1.24V693.70h-1.24zM866.88 643.10h1.24V693.70h-1.24zM870.88 637.00h1.24V693.70h-1.24zM873.88 651.00h1.24V693.70h-1.24zM877.88 648.00h1.24V693.70h-1.24zM880.88 649.10h1.24V693.70h-1.24zM884.88 652.10h1.24V693.70h-1.24zM887.88 651.00h1.24V693.70h-1.24zM891.88 654.10h1.24V693.70h-1.24zM894.88 653.10h1.24V693.70h-1.24zM898.88 657.30h1.24V693.70h-1.24zM901.88 648.10h1.24V693.70h-1.24zM905.88 624.00h1.24V693.70h-1.24zM908.88 638.00h1.24V693.70h-1.24zM911.88 640.10h1.24V693.70h-1.24zM915.88 637.20h1.24V693.70h-1.24zM918.88 637.20h1.24V693.70h-1.24zM922.88 654.10h1.24V693.70h-1.24zM925.88 645.10h1.24V693.70h-1.24zM929.88 654.10h1.24V693.70h-1.24zM932.88 640.90h1.24V693.70h-1.24zM936.88 646.00h1.24V693.70h-1.24zM939.88 640.90h1.24V693.70h-1.24zM943.88 651.00h1.24V693.70h-1.24zM946.88 640.90h1.24V693.70h-1.24zM950.88 645.10h1.24V693.70h-1.24zM953.88 649.10h1.24V693.70h-1.24zM957.88 651.90h1.24V693.70h-1.24zM960.88 655.10h1.24V693.70h-1.24zM963.88 651.00h1.24V693.70h-1.24zM967.88 656.00h1.24V693.70h-1.24zM970.88 657.30h1.24V693.70h-1.24zM974.88 652.00h1.24V693.70h-1.24zM977.88 650.10h1.24V693.70h-1.24zM981.88 655.00h1.24V693.70h-1.24zM984.88 640.90h1.24V693.70h-1.24zM988.88 631.80h1.24V693.70h-1.24zM991.88 624.20h1.24V693.70h-1.24zM995.88 641.80h1.24V693.70h-1.24zM998.88 634.80h1.24V693.70h-1.24zM1002.88 641.80h1.24V693.70h-1.24zM1005.88 582.90h1.24V693.70h-1.24zM1008.88 596.10h1.24V693.70h-1.24zM1012.88 630.00h1.24V693.70h-1.24zM1015.88 633.00h1.24V693.70h-1.24zM1019.88 648.00h1.24V693.70h-1.24zM1022.88 640.90h1.24V693.70h-1.24zM1026.88 652.90h1.24V693.70h-1.24zM1029.88 639.20h1.24V693.70h-1.24zM1033.88 621.90h1.24V693.70h-1.24zM1043.88 672.90h1.24V693.70h-1.24zM1047.88 640.10h1.24V693.70h-1.24zM1050.88 644.10h1.24V693.70h-1.24zM1054.88 640.10h1.24V693.70h-1.24zM1057.88 645.90h1.24V693.70h-1.24zM1060.88 638.80h1.24V693.70h-1.24zM1064.88 651.80h1.24V693.70h-1.24zM1067.88 633.90h1.24V693.70h-1.24zM1071.88 634.80h1.24V693.70h-1.24zM1074.88 630.90h1.24V693.70h-1.24zM1078.88 646.70h1.24V693.70h-1.24zM1081.88 648.00h1.24V693.70h-1.24zM1085.88 637.10h1.24V693.70h-1.24zM1088.88 646.00h1.24V693.70h-1.24zM1092.88 648.80h1.24V693.70h-1.24zM1095.88 618.80h1.24V693.70h-1.24zM1099.88 630.90h1.24V693.70h-1.24zM1102.88 632.90h1.24V693.70h-1.24zM1105.88 644.00h1.24V693.70h-1.24zM1109.88 647.80h1.24V693.70h-1.24zM1112.88 640.90h1.24V693.70h-1.24zM1116.88 637.80h1.24V693.70h-1.24zM1119.88 629.10h1.24V693.70h-1.24zM1123.88 639.80h1.24V693.70h-1.24zM1126.88 625.10h1.24V693.70h-1.24zM1130.88 627.10h1.24V693.70h-1.24zM1133.88 650.20h1.24V693.70h-1.24zM1137.88 647.00h1.24V693.70h-1.24zM1140.88 649.20h1.24V693.70h-1.24zM1144.88 652.00h1.24V693.70h-1.24zM1147.88 653.00h1.24V693.70h-1.24zM1151.88 647.00h1.24V693.70h-1.24zM1154.88 612.90h1.24V693.70h-1.24zM1157.88 640.10h1.24V693.70h-1.24zM1161.88 631.80h1.24V693.70h-1.24zM1164.88 642.90h1.24V693.70h-1.24zM1168.88 644.00h1.24V693.70h-1.24zM1171.88 636.00h1.24V693.70h-1.24zM1175.88 640.10h1.24V693.70h-1.24zM1178.88 645.10h1.24V693.70h-1.24zM1182.88 635.00h1.24V693.70h-1.24zM1185.88 647.00h1.24V693.70h-1.24zM1189.88 649.20h1.24V693.70h-1.24zM1192.88 650.20h1.24V693.70h-1.24zM1196.88 648.10h1.24V693.70h-1.24zM1199.88 632.90h1.24V693.70h-1.24zM1203.88 648.10h1.24V693.70h-1.24zM1206.88 646.00h1.24V693.70h-1.24zM1209.88 653.00h1.24V693.70h-1.24zM1213.88 641.90h1.24V693.70h-1.24zM1216.88 650.90h1.24V693.70h-1.24zM1220.88 641.90h1.24V693.70h-1.24zM1223.88 608.10h1.24V693.70h-1.24zM1227.88 630.90h1.24V693.70h-1.24zM1230.88 648.10h1.24V693.70h-1.24zM1234.88 640.90h1.24V693.70h-1.24zM1237.88 636.00h1.24V693.70h-1.24zM1241.88 623.00h1.24V693.70h-1.24zM1244.88 649.20h1.24V693.70h-1.24zM1248.88 631.80h1.24V693.70h-1.24zM1251.88 634.00h1.24V693.70h-1.24zM1254.88 636.00h1.24V693.70h-1.24zM1258.88 612.90h1.24V693.70h-1.24zM1261.88 646.00h1.24V693.70h-1.24zM1265.88 622.20h1.24V693.70h-1.24zM1268.88 629.10h1.24V693.70h-1.24zM1272.88 650.20h1.24V693.70h-1.24zM1275.88 637.10h1.24V693.70h-1.24zM1279.88 647.00h1.24V693.70h-1.24zM1282.88 628.10h1.24V693.70h-1.24zM1286.88 650.20h1.24V693.70h-1.24zM1289.88 639.10h1.24V693.70h-1.24zM1293.88 648.10h1.24V693.70h-1.24zM1296.88 650.20h1.24V693.70h-1.24zM1300.88 649.20h1.24V693.70h-1.24zM1303.88 645.10h1.24V693.70h-1.24zM1306.88 650.20h1.24V693.70h-1.24zM1310.88 649.20h1.24V693.70h-1.24zM1313.88 652.00h1.24V693.70h-1.24zM1317.88 630.90h1.24V693.70h-1.24zM1320.88 636.00h1.24V693.70h-1.24zM1324.88 621.20h1.24V693.70h-1.24zM1327.88 642.90h1.24V693.70h-1.24zM1331.88 630.90h1.24V693.70h-1.24zM1334.88 639.10h1.24V693.70h-1.24zM1338.88 652.00h1.24V693.70h-1.24zM1341.88 641.90h1.24V693.70h-1.24zM1345.88 653.90h1.24V693.70h-1.24zM1348.88 640.10h1.24V693.70h-1.24zM1352.88 640.10h1.24V693.70h-1.24zM1355.88 646.00h1.24V693.70h-1.24zM1358.88 648.10h1.24V693.70h-1.24zM1362.88 645.10h1.24V693.70h-1.24z"/></svg>
<div class="a" style="left:1441px;top:0;width:1px;height:788px;background:#8c8c8c"></div>
<div class="a" style="left:1442px;top:0;width:6px;height:796px;background:#000"></div>
<div class="a" style="left:0;top:788px;width:1448px;height:8px;background:#000"></div>
<div class="a" style="left:0;top:0;width:1px;height:796px;background:#000"></div>
</body></html>
